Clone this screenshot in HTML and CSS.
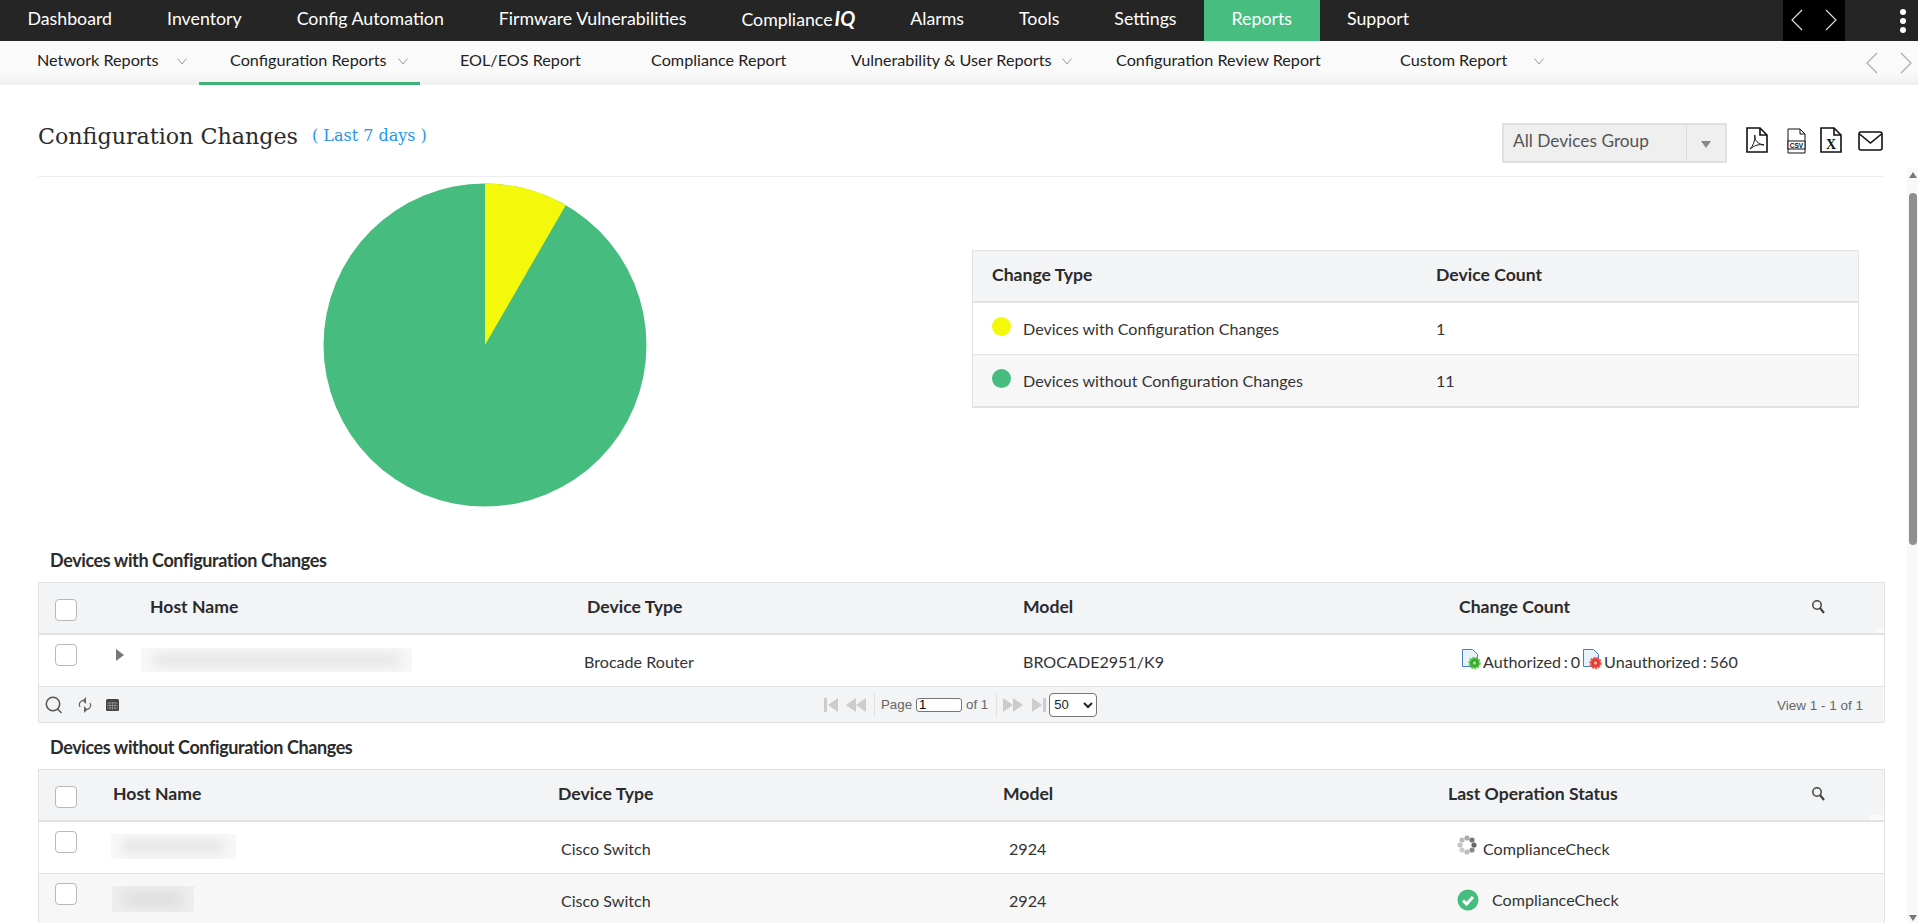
FILE: index.html
```html
<!DOCTYPE html>
<html lang="en">
<head>
<meta charset="utf-8">
<title>Configuration Changes</title>
<link rel="stylesheet" href="styles.css">
</head>
<body>
<nav class="topnav">
  <a class="tn">Dashboard</a><a class="tn">Inventory</a><a class="tn">Config Automation</a><a class="tn">Firmware Vulnerabilities</a><a class="tn">Compliance<b class="iq">IQ</b></a><a class="tn">Alarms</a><a class="tn">Tools</a><a class="tn">Settings</a><a class="tn tn-active">Reports</a><a class="tn">Support</a>
  <div class="tn-arrows">
    <svg width="20" height="22" viewBox="0 0 20 22"><path d="M13 1 3 11l10 10" class="arrow-w"/></svg>
    <svg width="20" height="22" viewBox="0 0 20 22"><path d="M7 1l10 10L7 21" class="arrow-w"/></svg>
  </div>
  <div class="tn-more"><i></i><i></i><i></i></div>
</nav>
<nav class="subnav">
  <a class="sn">Network Reports<svg class="chev chev-a" width="10" height="7" viewBox="0 0 10 7"><path d="M.5.5 5 6 9.500.5"/></svg></a>
  <a class="sn sn-active">Configuration Reports<svg class="chev chev-b" width="10" height="7" viewBox="0 0 10 7"><path d="M.5.5 5 6 9.500.5"/></svg></a>
  <a class="sn">EOL/EOS Report</a>
  <a class="sn">Compliance Report</a>
  <a class="sn">Vulnerability &amp; User Reports<svg class="chev chev-b" width="10" height="7" viewBox="0 0 10 7"><path d="M.5.5 5 6 9.500.5"/></svg></a>
  <a class="sn">Configuration Review Report</a>
  <a class="sn">Custom Report<svg class="chev chev-c" width="10" height="7" viewBox="0 0 10 7"><path d="M.5.5 5 6 9.500.5"/></svg></a>
  <div class="sn-arrows">
    <svg width="20" height="22" viewBox="0 0 20 22"><path d="M13 1 3 11l10 10" class="arrow-g"/></svg>
    <svg width="20" height="22" viewBox="0 0 20 22"><path d="M7 1l10 10L7 21" class="arrow-g"/></svg>
  </div>
</nav>
<div class="main">
  <main class="content">
    <header class="head">
      <h1 class="title">Configuration Changes</h1>
      <span class="period">( Last 7 days )</span>
      <div class="group-select"><span class="group-label">All Devices Group</span><span class="group-caret"><i></i></span></div>
      <div class="exports">
        <svg width="22" height="26" viewBox="0 0 22 26"><path class="doc" d="M1 1h13l7 7v17H1z"/><path class="doc" d="M14 1v7h7"/><path class="doc-thin" d="M4 22c3-3 5-8 5-13 0-2-1-1 0 2 1 4 4 6 9 7-5-1-9 0-14 4z"/></svg>
        <svg class="ex-csv" width="19" height="26" viewBox="0 0 19 26"><path class="doc-thin" d="M1 1h12l5 5v19H1z"/><path class="doc-thin" d="M13 1v5h5"/><rect x="1" y="13" width="17" height="8" fill="#fff" stroke="#111"/><text x="9.500" y="20" class="csv-t">CSV</text></svg>
        <svg class="ex-x" width="22" height="26" viewBox="0 0 22 26"><path class="doc" d="M1 1h13l7 7v17H1z"/><path class="doc" d="M14 1v7h7"/><text x="11" y="22" class="x-t">X</text></svg>
        <svg class="ex-mail" width="25" height="20" viewBox="0 0 25 20"><rect x="1" y="1" width="23" height="18" rx="2" class="doc"/><path class="doc" d="M1.500 3 12.500 12 23.500 3"/></svg>
      </div>
    </header>

    <section class="chart-row">
      <svg class="pie" width="324" height="324" viewBox="0 0 324 324">
        <circle cx="162" cy="162" r="161.500" fill="#46bd7f"/>
        <path d="M162 162V.5A161.500 161.500 0 0 1 242.750 22.140z" fill="#f4f80a"/>
      </svg>
      <div class="legend">
        <div class="lg-row lg-head"><span>Change Type</span><span>Device Count</span></div>
        <div class="lg-row"><span class="lg-name"><i class="dot dot-y"></i>Devices with Configuration Changes</span><span>1</span></div>
        <div class="lg-row lg-alt"><span class="lg-name"><i class="dot dot-g"></i>Devices without Configuration Changes</span><span>11</span></div>
      </div>
    </section>

    <h2 class="sec">Devices with Configuration Changes</h2>
    <div class="tbl t1">
      <div class="tr th">
        <div class="c0"><i class="cb"></i></div><div>Host Name</div><div>Device Type</div><div>Model</div><div>Change Count</div>
        <div class="c-s"><svg width="15" height="15" viewBox="0 0 15 15"><circle cx="6" cy="6" r="4.200" class="mag"/><path d="M9 9l4 5" class="mag-h"/></svg></div>
      </div>
      <div class="tr td">
        <div class="c0"><i class="cb cb-row"></i><i class="expand"></i></div>
        <div><span class="redact r-a"></span></div>
        <div>Brocade Router</div>
        <div>BROCADE2951/K9</div>
        <div class="counts">
          <svg class="gear" width="20" height="21" viewBox="0 0 20 21"><path d="M.5.5h10l5 5v12H.5z" fill="#e9f1fb" stroke="#4a7fc4"/><circle cx="12.500" cy="14" r="5" fill="#37a52c" stroke="#5cc84d" stroke-width="2.500" stroke-dasharray="2 1"/><circle cx="12.500" cy="14" r="1.800" fill="#9fe08f"/></svg><span>Authorized : 0</span>
          <svg class="gear gear-2" width="20" height="21" viewBox="0 0 20 21"><path d="M.5.5h10l5 5v12H.5z" fill="#e9f1fb" stroke="#4a7fc4"/><circle cx="12.500" cy="14" r="5" fill="#e03a2e" stroke="#f0594d" stroke-width="2.500" stroke-dasharray="2 1"/><circle cx="12.500" cy="14" r="1.800" fill="#f6a79f"/></svg><span>Unauthorized : 560</span>
        </div>
        <div></div>
      </div>
      <div class="tfoot">
        <div class="tf-tools">
          <svg width="19" height="18" viewBox="0 0 19 18"><circle cx="8" cy="8" r="6.700" class="tool"/><path d="M12.500 13l4 4" class="tool"/></svg>
          <svg width="14" height="16" viewBox="0 0 14 16"><path class="tool-t" d="M2 10c-2-4 1-7 5-6.500M12 6c2 4-1 7-5 6.500"/><path fill="#666" d="M8 0v7L4.500 3.500zM6 9v7l3.500-3.500z"/></svg>
          <svg width="13" height="12" viewBox="0 0 13 12"><rect width="13" height="12" rx="1.500" fill="#444"/><path d="M1 4h11M1 6.500h11M1 9h11M4 3v8M6.500 3v8M9 3v8" stroke="#aaa" stroke-width=".6"/></svg>
        </div>
        <div class="pager">
          <svg width="14" height="14" viewBox="0 0 14 14"><path fill="#ccc" d="M0 0h3v14H0zM14 0v14L4 7z"/></svg>
          <svg class="pg-prev" width="20" height="14" viewBox="0 0 20 14"><path fill="#ccc" d="M10 0v14L0 7zM20 0v14L10 7z"/></svg>
          <i class="pg-sep"></i>
          <span class="pg-t">Page</span><input class="pg-in" type="text" value="1"><span class="pg-t">of 1</span>
          <i class="pg-sep"></i>
          <svg width="20" height="14" viewBox="0 0 20 14"><path fill="#ccc" d="M0 0v14l10-7zM10 0v14l10-7z"/></svg>
          <svg class="pg-last" width="14" height="14" viewBox="0 0 14 14"><path fill="#ccc" d="M11 0h3v14h-3zM0 0v14l10-7z"/></svg>
          <select class="pg-sel"><option>50</option></select>
        </div>
        <div class="tf-view">View 1 - 1 of 1</div>
      </div>
    </div>

    <h2 class="sec sec-2">Devices without Configuration Changes</h2>
    <div class="tbl t2">
      <div class="tr th">
        <div class="c0"><i class="cb"></i></div><div>Host Name</div><div>Device Type</div><div>Model</div><div>Last Operation Status</div>
        <div class="c-s"><svg width="15" height="15" viewBox="0 0 15 15"><circle cx="6" cy="6" r="4.200" class="mag"/><path d="M9 9l4 5" class="mag-h"/></svg></div>
      </div>
      <div class="tr td">
        <div class="c0"><i class="cb cb-row"></i></div>
        <div><span class="redact r-b"></span></div>
        <div>Cisco Switch</div><div>2924</div>
        <div class="status">
          <svg width="20" height="20" viewBox="0 0 20 20"><circle cx="10" cy="3" r="2.600" fill="#aaa"/><circle cx="15" cy="5" r="2.600" fill="#777"/><circle cx="17" cy="10" r="2.600" fill="#666"/><circle cx="15" cy="15" r="2.600" fill="#888"/><circle cx="10" cy="17" r="2.600" fill="#bbb"/><circle cx="5" cy="15" r="2.600" fill="#ccc"/><circle cx="3" cy="10" r="2.600" fill="#c4c4c4"/><circle cx="5" cy="5" r="2.600" fill="#bbb"/></svg>
          <span>ComplianceCheck</span>
        </div>
        <div></div>
      </div>
      <div class="tr td tr-alt">
        <div class="c0"><i class="cb cb-row"></i></div>
        <div><span class="redact r-c"></span></div>
        <div>Cisco Switch</div><div>2924</div>
        <div class="status status-ok">
          <svg width="22" height="22" viewBox="0 0 22 22"><circle cx="11" cy="11" r="10.500" fill="#46bd7f"/><path d="M6 11.500l3.500 3.500L16 8" fill="none" stroke="#fff" stroke-width="3"/></svg>
          <span>ComplianceCheck</span>
        </div>
        <div></div>
      </div>
    </div>
  </main>
  <aside class="scrollbar">
    <i class="sb-up"></i>
    <i class="sb-thumb"></i>
    <i class="sb-down"></i>
  </aside>
</div>
</body>
</html>
```
FILE: styles.css
```css
* { box-sizing: border-box; }
html, body { margin: 0; height: 923px; overflow: hidden; background: #fff; }
body { font-family: Lato, "Liberation Sans", sans-serif; color: #333; font-size: 16.100px; }
i { display: block; }

.topnav { height: 41px; background: #252525; display: flex; color: #fff; font-size: 17.750px; }
.tn { padding: 0 27.5px; line-height: 37px; white-space: nowrap; }
.tn-active { background: #48bd80; }
.iq { font-style: italic; font-size: 20px; margin-left: 2px; }
.tn-arrows { margin-left: auto; width: 62px; background: #000; display: flex; justify-content: space-between; align-items: center; padding: 0 6px 1px 6px; flex: none; }
.arrow-w, .arrow-g { fill: none; stroke-width: 1.200; }
.arrow-w { stroke: #ddd; }
.arrow-g { stroke: #aaa; }
.tn-more { width: 73px; display: flex; flex-direction: column; align-items: flex-end; justify-content: center; gap: 3px; padding-right: 12px; flex: none; }
.tn-more i { width: 6px; height: 6px; border-radius: 50%; background: #fff; }

.subnav { height: 44px; background: linear-gradient(#fafafa 0, #fafafa 32px, #efefef 44px); padding-left: 6px; display: grid; grid-template-columns: 193px 230px 191px 200px 265px 284px 1fr; position: relative; color: #222; font-size: 16.200px; }
.sn { padding-left: 31px; white-space: nowrap; display: flex; align-items: center; height: 37px; }
.sn-active { width: 221px; height: 44px; border-bottom: 3px solid #3eb279; padding-bottom: 4px; }
.chev { fill: none; stroke: #999; stroke-width: 1; margin-top: 4px; }
.chev-a { margin-left: 18px; }
.chev-b { margin-left: 11px; }
.chev-c { margin-left: 27px; }
.sn-arrows { position: absolute; right: 4px; top: 11px; display: flex; gap: 10px; }

.main { display: flex; }
.content { flex: 1; min-width: 0; height: 838px; padding: 0 22px 0 38px; overflow: hidden; }
.head { display: flex; align-items: flex-start; padding: 38px 0 13px; margin-right: 2px; border-bottom: 1px solid #eee; height: 92px; }
.title { margin: 0; font: 400 22.200px/26px "DejaVu Serif", "Liberation Serif", serif; color: #2b2b2b; }
.period { margin: 0 0 0 14px; font: 400 16px/26px "DejaVu Serif", serif; color: #2196f3; }
.group-select { margin-left: auto; width: 225px; height: 40px; background: #efefef; border: 2px solid #e0e0e0; display: flex; color: #555; font-size: 17.300px; flex: none; }
.group-label { flex: 1; padding: 0 0 3px 9px; line-height: 32px; border-right: 1px solid #dcdcdc; }
.group-caret { width: 38px; display: flex; align-items: center; justify-content: center; padding-top: 2px; }
.group-caret i { border: 5px solid transparent; border-top: 7px solid #888; border-bottom: 0; width: 0; height: 0; }
.exports { margin-left: 19px; display: flex; align-items: flex-start; padding-top: 4px; flex: none; }
.ex-csv { margin: 1px 0 0 19px; }
.ex-x { margin-left: 14px; }
.ex-mail { margin: 4px 0 0 16px; }
.doc { fill: none; stroke: #111; stroke-width: 1.600; }
.doc-thin { fill: none; stroke: #111; stroke-width: 1; }
.csv-t { font: 700 6.500px "Liberation Sans", sans-serif; text-anchor: middle; fill: #111; }
.x-t { font: 700 14px "Liberation Serif", serif; text-anchor: middle; fill: #111; }

.chart-row { display: flex; align-items: flex-start; height: 371px; padding-top: 6px; }
.pie { margin-left: 285px; flex: none; }
.legend { margin: 67px 0 0 325px; width: 887px; border: 1px solid #e2e2e2; border-bottom-width: 2px; flex: none; }
.lg-row { display: grid; grid-template-columns: 444px 1fr; padding-left: 19px; height: 52px; align-items: center; border-top: 1px solid #e2e2e2; }
.lg-head { background: #f3f4f6; font-size: 17.600px; font-weight: 700; height: 52px; border-top: 0; border-bottom: 2px solid #e2e2e2; color: #2b2b2b; padding-bottom: 3px; }
.lg-row:nth-child(2) { height: 51px; border-top: 0; }
.lg-alt { background: #f7f7f7; }
.lg-name { display: flex; align-items: center; }
.dot { width: 19px; height: 19px; border-radius: 50%; margin: -5px 12px 0 0; }
.dot-y { background: #f4f80a; }
.dot-g { background: #46bd7f; }

.sec { margin: 0 0 10px 12px; font-size: 18px; letter-spacing: -.4px; line-height: 24px; font-weight: 700; color: #2b2b2b; }
.sec-2 { margin-top: 12px; }

.tbl { border: 1px solid #e2e2e2; border-bottom: 0; }
.tr { display: grid; align-items: center; position: relative; }
.t1 .tr { grid-template-columns: 100px 444px 436px 436px 345px 1fr; }
.t2 .tr { grid-template-columns: 70px 444px 445px 445px 357px 1fr; }
.th { height: 52px; background: #f3f4f6; border-bottom: 2px solid #e2e2e2; font-size: 17.600px; font-weight: 700; color: #2b2b2b; padding-bottom: 3px; }
.th::after { content: ""; position: absolute; right: 0; bottom: 0; height: 5px; background: #fafafa; }
.t1 .th::after { width: 8px; }
.t2 .th::after { width: 14px; }
.td { height: 52px; border-bottom: 1px solid #e2e2e2; color: #333; padding-top: 1px; }
.tr-alt { background: #f7f7f7; }
.c0 { display: flex; align-self: start; padding: 16px 0 0 16px; }
.td .c0 { padding-top: 8px; }
.cb { width: 22px; height: 22px; border: 1px solid #b8b8b8; border-radius: 4px; background: #fff; flex: none; }
.expand { margin: 5px 0 0 39px; width: 0; height: 0; border: 6px solid transparent; border-left: 8px solid #777; border-right: 0; }
.c-s { display: flex; padding-left: 11px; }
.mag { fill: none; stroke: #444; stroke-width: 1.500; }
.mag-h { stroke: #444; stroke-width: 2.200; }
.tool { fill: none; stroke: #555; stroke-width: 1.500; }
.tool-t { fill: none; stroke: #666; stroke-width: 1.200; }

.t1 .th > :nth-child(2) { padding-left: 11px; }
.t1 .th > :nth-child(3), .t1 .th > :nth-child(4), .t1 .th > :nth-child(5) { padding-left: 4px; }
.t1 .td > :nth-child(3) { padding-left: 1px; }
.t1 .td > :nth-child(4) { padding-left: 4px; }
.t1 .td > :nth-child(5) { padding-left: 7px; }
.t2 .th > :nth-child(2) { padding-left: 4px; }
.t2 .th > :nth-child(3), .t2 .th > :nth-child(4) { padding-left: 5px; }
.t2 .th > :nth-child(5) { padding-left: 5px; }
.t2 .td > :nth-child(3) { padding-left: 8px; }
.t2 .td > :nth-child(4) { padding-left: 11px; }
.t2 .td > :nth-child(5) { padding-left: 14px; }

.redact { display: block; background: #f8f8f8; position: relative; overflow: hidden; margin-top: -3px; }
.redact::before { content: ""; position: absolute; inset: 6px 12px; background: #e4e4e4; filter: blur(6px); }
.r-a { width: 271px; height: 24px; margin-left: 2px; }
.r-b { width: 125px; height: 25px; margin-left: 2px; }
.r-c { width: 82px; height: 26px; margin-left: 3px; background: #eee; }
.r-c::before { background: #ddd; }

.counts { display: flex; align-items: flex-start; white-space: nowrap; }
.counts span { margin-left: 1px; word-spacing: -1.200px; }
.gear { margin-top: -3px; flex: none; }
.gear-2 { margin-left: 3px; }
.status { display: flex; align-items: center; white-space: nowrap; }
.status span { margin-left: 6px; }
.status svg { margin-top: -6px; flex: none; }
.status-ok span { margin-left: 13px; margin-top: -2px; }
.status-ok svg { margin-top: -1px; }

.tfoot { height: 36px; background: #f3f4f6; border-bottom: 1px solid #e2e2e2; display: grid; grid-template-columns: 785px auto 1fr; align-items: center; font: 13.300px "Liberation Sans", Arial, sans-serif; color: #666; margin-right: 1px; }
.tf-tools { display: flex; align-items: center; gap: 14px; padding-left: 6px; }
.pager { display: flex; align-items: center; }
.pg-prev { margin-left: 8px; }
.pg-sep { width: 1px; height: 24px; background: #e2e2e2; margin: 0 6px 0 8px; }
.pg-t { color: #666; }
.pg-in { width: 46px; height: 14px; margin: 0 4px; padding: 0 2px; border: 1px solid #767676; border-radius: 3px; font: 13px "Liberation Sans", Arial, sans-serif; }
.pg-last { margin-left: 9px; }
.pg-sel { width: 48px; height: 24px; margin-left: 3px; font: 13px "Liberation Sans", Arial, sans-serif; background: #fff; color: #222; border: 1px solid #767676; border-radius: 4px; }
.tf-view { text-align: right; padding-right: 20px; font-size: 13.500px; padding-top: 2px; }

.scrollbar { width: 11px; height: 755px; margin-top: 83px; background: #f8f8f8; display: flex; flex-direction: column; align-items: center; padding-top: 4px; flex: none; }
.sb-up { width: 0; height: 0; border: 4px solid transparent; border-bottom: 6px solid #777; border-top: 0; }
.sb-thumb { width: 8px; height: 352px; margin-top: 15px; background: #8f8f8f; border-radius: 4px; }
.sb-down { width: 0; height: 0; margin-top: auto; margin-bottom: 2px; border: 4px solid transparent; border-top: 6px solid #777; border-bottom: 0; }
```
